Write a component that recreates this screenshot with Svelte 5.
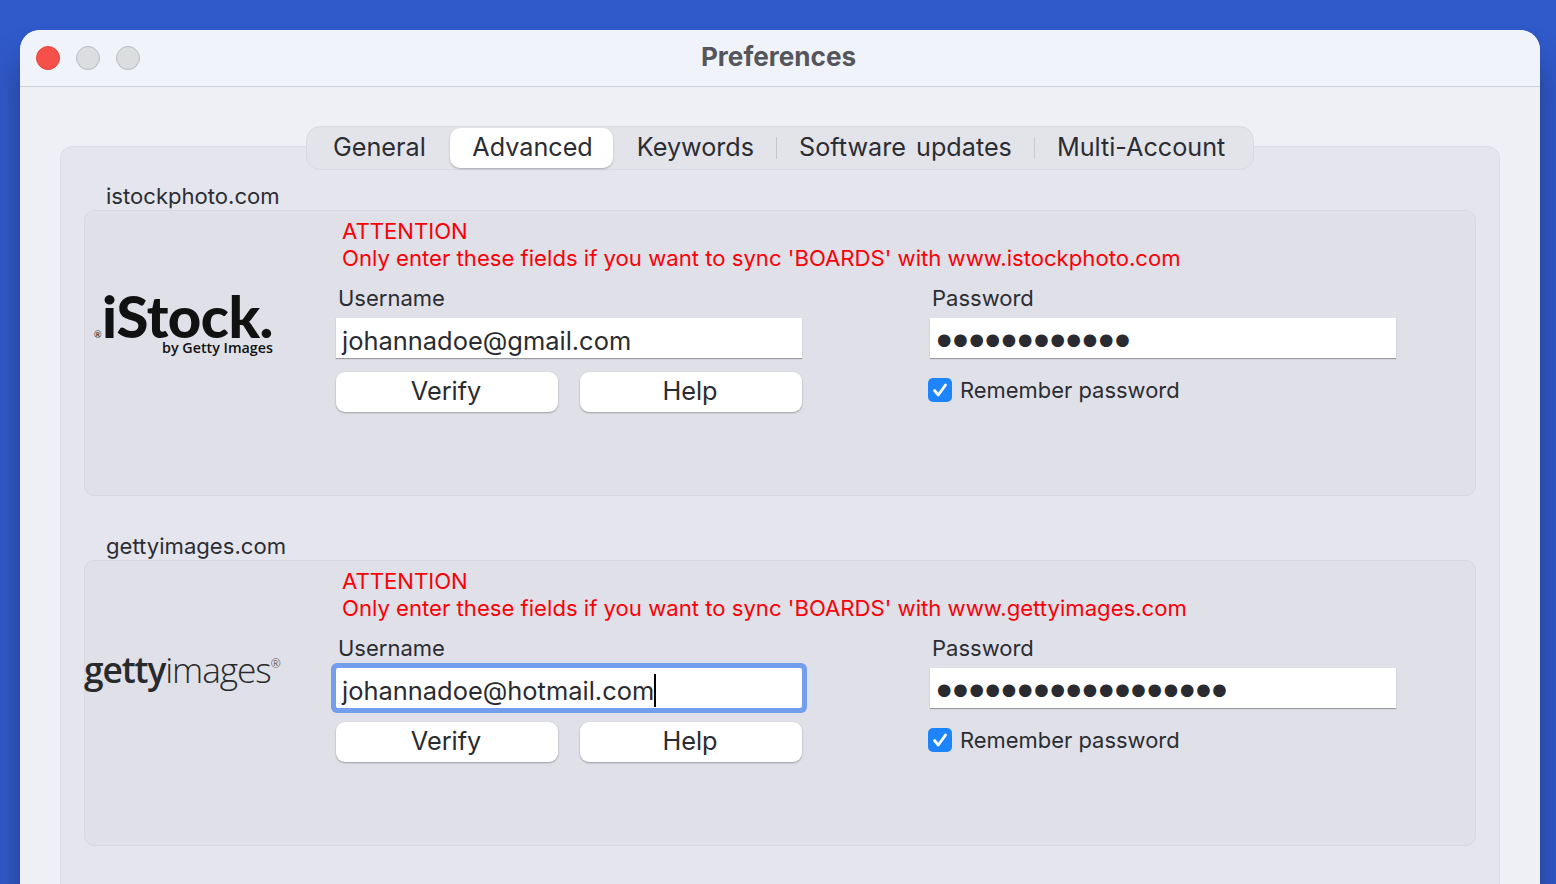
<script>
  const accounts = [
    { site: 'istockphoto.com', user: 'johannadoe@gmail.com', dots: 12, focused: false, logo: 'istock' },
    { site: 'gettyimages.com', user: 'johannadoe@hotmail.com', dots: 18, focused: true, logo: 'getty' }
  ];
  const tabs = ['General', 'Advanced', 'Keywords', 'Software updates', 'Multi-Account'];
  const activeTab = 'Advanced';
</script>

<div class="desktop">
  <div class="window">
    <header class="titlebar">
      <div class="lights">
        <span class="light close"></span>
        <span class="light"></span>
        <span class="light"></span>
      </div>
      <div class="title">Preferences</div>
    </header>

    <div class="content">
      <nav class="tabs">
        {#each tabs as tab, i}
          <div class="tab" class:active={tab === activeTab} class:sep={i >= 2 && i < tabs.length - 1}>{tab}</div>
        {/each}
      </nav>

      <div class="panel">
        {#each accounts as acc}
          <section class="account">
            <div class="site">{acc.site}</div>
            <div class="box">
              <div class="logo">
                {#if acc.logo === 'istock'}
                  <div class="istock">
                    <div class="istock-main"><span class="reg">®</span>iStock.</div>
                    <div class="istock-sub">by Getty Images</div>
                  </div>
                {:else}
                  <div class="getty"><b>getty</b>images<sup>®</sup></div>
                {/if}
              </div>
              <div class="form">
                <div class="alert">
                  <div>ATTENTION</div>
                  <div>Only enter these fields if you want to sync 'BOARDS' with www.{acc.site}</div>
                </div>
                <div class="cols">
                  <div class="col">
                    <div class="label">Username</div>
                    <div class="field" class:focused={acc.focused}>{acc.user}{#if acc.focused}<span class="caret"></span>{/if}</div>
                    <div class="buttons">
                      <button>Verify</button>
                      <button>Help</button>
                    </div>
                  </div>
                  <div class="col">
                    <div class="label">Password</div>
                    <div class="field dots">{'●'.repeat(acc.dots)}</div>
                    <div class="remember">
                      <span class="check">
                        <svg viewBox="0 0 24 24" width="24" height="24"><path d="M6.5 12.5l3.8 4.5 7.2-10" fill="none" stroke="#fff" stroke-width="2.8" stroke-linecap="round" stroke-linejoin="round"/></svg>
                      </span>
                      Remember password
                    </div>
                  </div>
                </div>
              </div>
            </div>
          </section>
        {/each}
      </div>
    </div>
  </div>
</div>

<style>
  :global(body) {
    margin: 0;
    background: #3059c9;
  }

  .desktop {
    height: 884px;
    overflow: hidden;
    padding: 30px 16px 0 20px;
    box-sizing: border-box;
    font-family: Inter, "Liberation Sans", sans-serif;
    color: #2a2b30;
  }

  .window {
    height: 900px;
    border-radius: 20px 20px 0 0;
    background: #eff0f6;
    box-shadow: 0 30px 30px rgba(20, 35, 80, 0.5);
    overflow: hidden;
  }

  .titlebar {
    height: 56px;
    position: relative;
    display: flex;
    align-items: center;
    justify-content: center;
    background: #f1f3fb;
    border-bottom: 1px solid #cfd0d6;
  }

  .lights {
    position: absolute;
    left: 16px;
    top: 16px;
    display: flex;
    gap: 16px;
  }

  .light {
    width: 24px;
    height: 24px;
    box-sizing: border-box;
    border-radius: 50%;
    background: #dcdde1;
    border: 1px solid #b9babf;
  }

  .light.close {
    background: #f5504a;
    border-color: #e5453f;
  }

  .title {
    font-size: 26.1px;
    font-weight: 700;
    color: #55565b;
    padding: 0 3px 3px 0;
  }

  .content {
    padding: 39px 40px 0;
  }

  .tabs {
    position: relative;
    z-index: 1;
    width: 948px;
    height: 44px;
    margin: 0 auto -24px;
    box-sizing: border-box;
    padding: 1px 4px;
    display: flex;
    gap: 1px;
    align-items: center;
    background: #e3e4ea;
    border: 1px solid #d9dadf;
    border-radius: 14px;
    font-size: 25.2px;
    word-spacing: 3px;
    color: #2c2d32;
  }

  .tab {
    height: 40px;
    line-height: 38px;
    padding: 0 22px;
    border-radius: 10px;
    white-space: nowrap;
    position: relative;
  }

  .tab:first-child {
    margin-right: 1.5px;
  }

  .tab.active {
    background: #fff;
    box-shadow: 0 1px 2px rgba(0, 0, 0, 0.25);
    padding-right: 20px;
    margin-right: 1px;
  }

  .tab.sep::after {
    content: '';
    position: absolute;
    right: -1px;
    top: 9px;
    height: 22px;
    width: 1px;
    background: #c8c9cf;
  }

  .panel {
    background: #e4e5ed;
    border: 1px solid #dddee4;
    border-radius: 12px;
    height: 800px;
    padding: 36px 23px 0;
  }

  .account {
    margin-bottom: 37px;
  }

  .site {
    font-size: 22.1px;
    line-height: 26px;
    padding-left: 22px;
    color: #2c2d32;
  }

  .box {
    height: 286px;
    box-sizing: border-box;
    display: flex;
    background: #dfe0e8;
    border: 1px solid #d8d9df;
    border-radius: 10px;
    margin-top: 1px;
  }

  .logo {
    width: 251px;
    flex: none;
    color: #111;
  }

  .istock {
    margin: 81px 0 0 9px;
    position: relative;
  }

  .istock-main {
    font-size: 58px;
    line-height: 48px;
    font-weight: 900;
    letter-spacing: -0.5px;
    padding-left: 8px;
    font-family: Lato, Inter, sans-serif;
  }

  .reg {
    position: absolute;
    left: 0;
    top: 38px;
    font-size: 9px;
    line-height: 9px;
    letter-spacing: 0;
    font-weight: 400;
  }

  .istock-sub {
    font-size: 14.3px;
    line-height: 14px;
    font-weight: 600;
    margin-top: 1px;
    padding-left: 68px;
    font-family: "Open Sans", sans-serif;
    white-space: nowrap;
  }

  .getty {
    margin: 85px 0 0 -1px;
    font-family: "Open Sans", sans-serif;
    font-size: 35.3px;
    line-height: 46px;
    font-weight: 300;
    letter-spacing: -1.1px;
    color: #2a2a2c;
    white-space: nowrap;
  }

  .getty b {
    font-weight: 600;
  }

  .getty sup {
    font-size: 12px;
    line-height: 0;
    vertical-align: 15px;
    letter-spacing: 0;
  }

  .form {
    flex: 1;
    padding-top: 7px;
  }

  .alert {
    margin-left: 6px;
    color: #fb0007;
    font-size: 22.13px;
    line-height: 27px;
  }

  .cols {
    display: flex;
    gap: 128px;
    margin-top: 13px;
  }

  .col {
    width: 466px;
  }

  .label {
    font-size: 22px;
    line-height: 26px;
    padding-left: 2px;
    margin-bottom: 7px;
    color: #2c2d32;
  }

  .field {
    height: 40px;
    box-sizing: border-box;
    line-height: 46px;
    background: #fff;
    padding-left: 6px;
    font-size: 25.45px;
    color: #2a2b30;
    box-shadow: 0 1px 1px rgba(0, 0, 0, 0.3);
    white-space: nowrap;
  }

  .field.focused {
    box-shadow: 0 0 0 5px #739eec;
    border-radius: 2px;
  }

  .caret {
    display: inline-block;
    width: 2px;
    height: 33px;
    background: #000;
    vertical-align: -7px;
  }

  .field.dots {
    font-family: "DejaVu Sans", sans-serif;
    font-size: 16.5px;
    letter-spacing: 1.8px;
    line-height: 44px;
    padding-left: 7px;
  }

  .buttons {
    display: flex;
    gap: 22px;
    margin-top: 14px;
  }

  button {
    flex: 1;
    height: 40px;
    border: 0;
    padding: 0 2px 4px 0;
    border-radius: 9px;
    background: #fff;
    box-shadow: 0 1px 2px rgba(0, 0, 0, 0.3);
    font: inherit;
    font-size: 25.3px;
    color: #2a2b30;
  }

  .remember {
    display: flex;
    align-items: center;
    gap: 8px;
    margin: 19px 0 0 -2px;
    font-size: 21.95px;
    color: #2c2d32;
  }

  .check {
    width: 24px;
    height: 24px;
    border-radius: 5px;
    background: #1d84fb;
    display: block;
  }

  .check svg {
    display: block;
  }
</style>
